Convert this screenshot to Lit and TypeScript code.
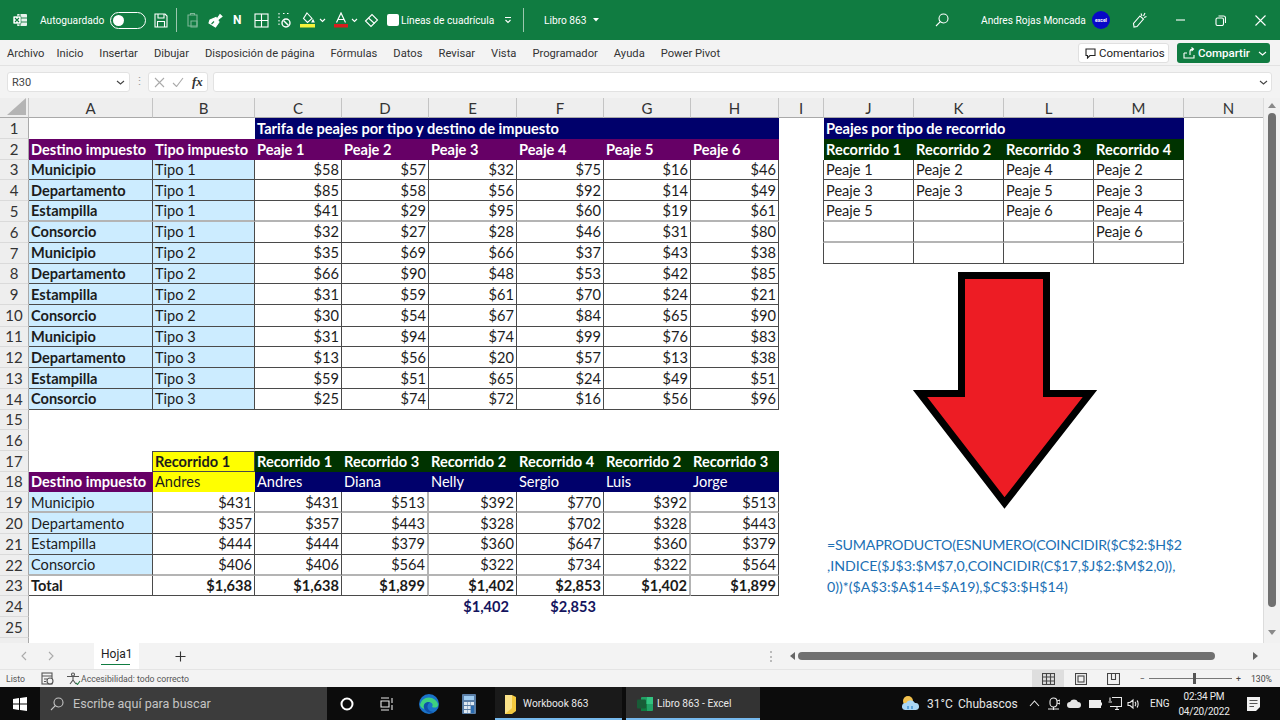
import { LitElement, html, css, svg } from "lit";
import { customElement } from "lit/decorators.js";

const COLS = ["A","B","C","D","E","F","G","H","I","J","K","L","M","N"];
const top = [
  ["Municipio","Tipo 1",58,57,32,75,16,46],["Departamento","Tipo 1",85,58,56,92,14,49],["Estampilla","Tipo 1",41,29,95,60,19,61],["Consorcio","Tipo 1",32,27,28,46,31,80],
  ["Municipio","Tipo 2",35,69,66,37,43,38],["Departamento","Tipo 2",66,90,48,53,42,85],["Estampilla","Tipo 2",31,59,61,70,24,21],["Consorcio","Tipo 2",30,54,67,84,65,90],
  ["Municipio","Tipo 3",31,94,74,99,76,83],["Departamento","Tipo 3",13,56,20,57,13,38],["Estampilla","Tipo 3",59,51,65,24,49,51],["Consorcio","Tipo 3",25,74,72,16,56,96],
];
const routes = [["Peaje 1","Peaje 2","Peaje 4","Peaje 2"],["Peaje 3","Peaje 3","Peaje 5","Peaje 3"],["Peaje 5","","Peaje 6","Peaje 4"],["","","","Peaje 6"],["","","",""]];
const bottom = [
  ["Municipio",431,431,513,392,770,392,513],["Departamento",357,357,443,328,702,328,443],["Estampilla",444,444,379,360,647,360,379],["Consorcio",406,406,564,322,734,322,564],
];
const totals = ["$1,638","$1,638","$1,899","$1,402","$2,853","$1,402","$1,899"];

const cell = (col: number, row: number, text: unknown, cls: string, span = 1) =>
  html`<div class="c ${cls}" style="grid-area:${row + 1}/${col + 1}/span 1/span ${span}">${text}</div>`;

const ic = (w: number, h: number, body: unknown, cls = "") =>
  html`<svg class=${cls} width=${w} height=${h} viewBox="0 0 ${w} ${h}" fill="none" stroke="currentColor" stroke-width="1.1">${body}</svg>`;

@customElement("x-sheet")
class XSheet extends LitElement {
  static styles = css`
    :host { display:block; position:relative; height:545px; overflow:hidden; background:#fff; }
    .grid { display:grid; grid-template-columns:29px 124px 102px 87px 87px 88px 87px 87px 88px 45px 90px 90px 90px 90px 90px; grid-template-rows:20px repeat(9,20.8px) 21.4px repeat(4,20.8px) 20.2px repeat(11,20.8px); font-family:Lato,sans-serif; font-size:14.6px; color:#1c1c1c; }
    .c { display:flex; align-items:center; padding:0 2px; white-space:nowrap; box-sizing:border-box; min-width:0; }
    .ch { background:#eeeeee; border-right:1px solid #c4c4c4; border-bottom:1px solid #a9a9a9; justify-content:center; color:#333; font-size:15px; padding:0; }
    .rh { background:#eeeeee; border-right:1px solid #a9a9a9; border-bottom:1px solid #dadada; justify-content:center; color:#333; font-size:15px; padding:0; }
    .corner { background:#eeeeee; border-right:1px solid #c4c4c4; border-bottom:1px solid #a9a9a9; position:relative; padding:0; }
    .corner svg { position:absolute; right:2px; bottom:2px; }
    .b { border-right:1px solid #4a4a4a; border-bottom:1px solid #4a4a4a; }
    .bl { border-left:1px solid #4a4a4a; margin-left:-1px; }
    .bt { border-top:1px solid #4a4a4a; }
    .gb { border-bottom:2px solid #b4b4b4; }
    .gp { padding-top:1px; }
    .gr { border-right:2px solid #b4b4b4; }
    .bold { font-weight:700; }
    .right { justify-content:flex-end; }
    .navy { background:#00006b; color:#fff; }
    .purple { background:#660066; color:#fff; }
    .green { background:#003300; color:#fff; }
    .sky { background:#ccecff; }
    .yellow { background:#ffff00; }
    .sum { color:#14145e; justify-content:flex-end; padding-right:8px; }
    .arrow { position:absolute; left:905px; top:172px; }
    .formula { position:absolute; left:827px; top:436px; color:#2070b4; font:14.2px/21px Lato,sans-serif; white-space:pre; }
    .l1 { letter-spacing:-.2px; }
    .vs { position:absolute; right:0; top:0; bottom:0; width:17px; background:#f1f1f1; border-left:1px solid #dcdcdc; box-sizing:border-box; }
    .thumb { position:absolute; left:4px; width:8px; top:15px; height:494px; border-radius:4px; background:#707070; }
    .up, .down { position:absolute; left:4px; width:0; height:0; border-left:4px solid transparent; border-right:4px solid transparent; }
    .up { top:5px; border-bottom:5px solid #8a8a8a; }
    .down { bottom:8px; border-top:5px solid #8a8a8a; }
  `;
  render() {
    const cells: unknown[] = [];
    cells.push(html`<div class="c corner" style="grid-area:1/1"><svg width="19" height="17"><path d="M19 0V17H0Z" fill="#b4b4b4"/></svg></div>`);
    COLS.forEach((l, i) => cells.push(cell(i + 1, 0, l, "ch")));
    for (let r = 1; r <= 26; r++) cells.push(cell(0, r, r === 26 ? "" : r, "rh"));

    cells.push(cell(3, 1, "Tarifa de peajes por tipo y destino de impuesto", "navy bold", 6));
    ["Destino impuesto","Tipo impuesto","Peaje 1","Peaje 2","Peaje 3","Peaje 4","Peaje 5","Peaje 6"].forEach((t, i) => cells.push(cell(i + 1, 2, t, "purple bold")));
    top.forEach((row, ri) => {
      const r = ri + 3;
      const g = r === 5 ? " gb" : "";
      cells.push(cell(1, r, row[0], "b sky bold" + g));
      cells.push(cell(2, r, row[1], "b sky" + g));
      for (let i = 2; i < 8; i++) cells.push(cell(i + 1, r, "$" + row[i], "b right" + g));
    });

    cells.push(cell(10, 1, "Peajes por tipo de recorrido", "navy bold", 4));
    ["Recorrido 1","Recorrido 2","Recorrido 3","Recorrido 4"].forEach((t, i) => cells.push(cell(10 + i, 2, t, "green bold")));
    routes.forEach((row, ri) => row.forEach((t, i) => {
      const r = ri + 3;
      cells.push(cell(10 + i, r, t, "b" + (i === 0 ? " bl" : "") + (r === 5 ? " gb" : r === 6 ? " gb gp" : "")));
    }));

    cells.push(cell(2, 17, "Recorrido 1", "b bt bl yellow bold"));
    ["Recorrido 1","Recorrido 3","Recorrido 2","Recorrido 4","Recorrido 2","Recorrido 3"].forEach((t, i) => cells.push(cell(3 + i, 17, t, "green bold")));
    cells.push(cell(1, 18, "Destino impuesto", "purple bold"));
    cells.push(cell(2, 18, "Andres", "yellow"));
    ["Andres","Diana","Nelly","Sergio","Luis","Jorge"].forEach((t, i) => cells.push(cell(3 + i, 18, t, "navy")));
    bottom.forEach((row, ri) => {
      const r = ri + 19;
      const g = r === 19 || r === 22 ? " gb gp" : "";
      cells.push(cell(1, r, row[0], "b sky" + g));
      for (let i = 1; i < 8; i++) cells.push(cell(i + 1, r, "$" + row[i], "b right" + g + (i === 3 || i === 6 ? " gr" : "")));
    });
    cells.push(cell(1, 23, "Total", "b bold"));
    totals.forEach((t, i) => cells.push(cell(2 + i, 23, t, "b bold right" + (i === 2 || i === 5 ? " gr" : ""))));
    cells.push(cell(5, 24, "$1,402", "bold sum"));
    cells.push(cell(6, 24, "$2,853", "bold sum"));

    return html`<div class="grid">${cells}</div>
      <svg class="arrow" width="200" height="250"><path d="M56.500 5.500H141.500V123.500H185L99.500 233L15 123.500H56.500Z" fill="#ed1c24" stroke="#000" stroke-width="7" stroke-miterlimit="6"/></svg>
      <div class="formula"><span class="l1">=SUMAPRODUCTO(ESNUMERO(COINCIDIR($C$2:$H$2</span>
,INDICE($J$3:$M$7,0,COINCIDIR(C$17,$J$2:$M$2,0)),
0))*($A$3:$A$14=$A19),$C$3:$H$14)</div>
      <div class="vs"><div class="up"></div><div class="thumb"></div><div class="down"></div></div>`;
  }
}

@customElement("app-root")
class AppRoot extends LitElement {
  static styles = css`
    :host { display:block; width:1280px; height:720px; overflow:hidden; font-family:Roboto,sans-serif; background:#f3f3f3; }
    .title { height:40px; background:#107c41; color:#fff; display:flex; align-items:center; font-size:10.2px; box-sizing:border-box; padding-left:12px; white-space:nowrap; }
    .title svg, .status svg, .task svg, .fx svg, .tabs svg { flex:none; display:block; }
    .m2{margin-left:2px}.m3{margin-left:3px}.m4{margin-left:4px}.m5{margin-left:5px}.m6{margin-left:6px}.m7{margin-left:7px}.m8{margin-left:8px}.m9{margin-left:9px}.m10{margin-left:10px}.m11{margin-left:11px}.m12{margin-left:12px}.m13{margin-left:13px}.m14{margin-left:14px}.m16{margin-left:16px}.m19{margin-left:19px}.m20{margin-left:20px}.m21{margin-left:21px}.m22{margin-left:22px}.m23{margin-left:23px}.m25{margin-left:25px}.m26{margin-left:26px}.m29{margin-left:29px}.m30{margin-left:30px}.m32{margin-left:32px}.m36{margin-left:36px}.m40{margin-left:40px}.m142{margin-left:142px}
    .dim { opacity:.45; }
    .sep { width:1px; height:24px; background:#9cc7ae; flex:none; }
    .N { font-weight:700; font-size:12px; width:9px; }
    .check { width:12px; height:12px; background:#fff; border-radius:2px; flex:none; }
    .auto { width:65px; } .lineas { width:89px; }
    .toggle { width:36px; height:17px; border:1px solid #fff; border-radius:9px; box-sizing:border-box; display:flex; align-items:center; padding-left:2px; flex:none; }
    .knob { width:11px; height:11px; border-radius:50%; background:#fff; }
    .grow { flex:1; }
    .who { width:102px; }
    .end { width:14px; flex:none; }
    .avatar { width:18px; height:18px; border-radius:50%; background:#0808c8; color:#fff; font-size:5px; font-weight:700; display:flex; align-items:center; justify-content:center; flex:none; }
    .ribbon { height:26px; background:#f3f3f3; display:flex; align-items:center; padding-left:7px; font-size:11.2px; color:#333; gap:16px; box-shadow:inset 0 -1px 0 #e2e2e2; white-space:nowrap; }
    .first { margin-right:-4px; }
    .btn { height:20px; box-sizing:border-box; border-radius:3px; display:flex; align-items:center; font-size:11.5px; flex:none; }
    .btn.white { width:91px; background:#fff; border:1px solid #e0e0e0; padding-left:6px; gap:3px; color:#222; margin-right:-8px; }
    .btn.share { width:93px; background:#107c41; color:#fff; padding-left:6px; gap:3px; font-weight:500; margin-right:10px; }
    .fx { height:32px; background:#f3f3f3; display:flex; align-items:center; padding:0 8px 0 7px; box-sizing:border-box; }
    .box { height:20px; background:#fff; border:1px solid #e2e2e2; border-radius:3px; box-sizing:border-box; display:flex; align-items:center; flex:none; color:#444; }
    .name { width:123px; padding:0 4px; font-size:11px; justify-content:space-between; }
    .dots { width:18px; text-align:center; color:#999; font-size:11px; flex:none; line-height:12px; }
    .fxb { width:60px; padding:0 3px 0 5px; gap:7px; color:#aaa; }
    .fxi { font:italic 700 13px "Liberation Serif",serif; color:#333; margin-left:1px; }
    .input { flex:1; margin-left:5px; justify-content:flex-end; padding-right:3px; }
    .tabs { height:26px; background:#f3f3f3; display:flex; align-items:center; position:relative; font-size:12px; color:#222; }
    .nav { color:#aaa; }
    .tab { width:45px; height:26px; background:#fff; box-sizing:border-box; padding:4px 0 0 7px; flex:none; }
    .tab span { display:block; width:29px; border-bottom:1.5px solid #107c41; padding-bottom:2px; line-height:15px; }
    .plus { color:#333; }
    .hs { position:absolute; left:770px; top:0; bottom:0; right:0; display:flex; align-items:center; }
    .split { width:1px; height:11px; border-left:2px dotted #bbb; }
    .la { width:0; height:0; border:4px solid transparent; border-right:5px solid #666; border-left:0; margin-left:17px; }
    .ra { width:0; height:0; border:4px solid transparent; border-left:5px solid #666; border-right:0; margin-left:38px; }
    .hthumb { width:417px; height:8px; background:#707070; border-radius:4px; margin-left:3px; }
    .status { height:18px; background:#f3f3f3; border-top:1px solid #e4e4e4; display:flex; align-items:center; font-size:8.7px; color:#555; padding-left:6px; position:relative; box-sizing:border-box; }
    .vw { position:absolute; left:1032px; top:0; bottom:0; width:32px; background:#dedede; }
    .views { position:absolute; left:1042px; top:0; bottom:0; right:0; display:flex; align-items:center; color:#444; }
    .slider { width:83px; height:1px; background:#777; position:relative; flex:none; }
    .slider i { position:absolute; left:44px; top:-5px; width:3px; height:11px; background:#555; }
    .task { height:33px; background:#0c0c0c; color:#eaeaea; display:flex; align-items:center; position:relative; font-size:10.2px; white-space:nowrap; }
    .start { margin-left:13px; }
    .search { width:287px; height:33px; background:#3c3c3c; display:flex; align-items:center; padding-left:10px; box-sizing:border-box; margin-left:13px; font-size:12.6px; color:#c4c4c4; gap:9px; flex:none; }
    .wb { width:127px; height:33px; display:flex; align-items:center; gap:6px; box-shadow:inset 0 -2px 0 #76b9ed; padding-left:9px; box-sizing:border-box; background:#1a1a1a; flex:none; }
    .xl { width:134px; height:33px; display:flex; align-items:center; gap:4px; box-shadow:inset 0 -2px 0 #76b9ed; padding-left:11px; box-sizing:border-box; background:#333; flex:none; margin-left:4px; }
    .time { width:64px; text-align:center; line-height:15px; font-size:10px; flex:none; letter-spacing:-.2px; }
    .t13 { font-size:12px; color:#e4e4e4; flex:none; }
    .temp { width:25px; } .chub { width:58px; } .eng { width:19px; font-size:10px; }
  `;

  render() {
    return html`
      <div class="title">
        ${ic(16,16,svg`<rect x="5" y="2" width="10" height="12" rx="1" fill="#fff" stroke="none" opacity=".9"/><path d="M8 2V14M5 6H15M5 10H15" stroke="#107c41" stroke-width=".9"/><rect x="1" y="4" width="8" height="8" rx="1" fill="#fff" stroke="#107c41" stroke-width=".6"/><path d="M3 6L7 10M7 6L3 10" stroke="#107c41" stroke-width="1.100"/>`)}
        <span class="m12 auto">Autoguardado</span>
        <span class="toggle m5"><span class="knob"></span></span>
        ${ic(14,15,svg`<path d="M1 1H11L13 3V14H1Z"/><path d="M4 1V5H10V1M3.500 14V8.500H10.500V14"/>`,"m8")}
        <span class="sep m8"></span>
        ${ic(13,16,svg`<path d="M2 3H11V14H2ZM4.500 3V1.500H8.500V3"/><path d="M5 9H11V15H5Z"/>`,"m9 dim")}
        ${ic(15,15,svg`<path d="M9 6L12 1.500L14 3.500L9.800 6.800Z" fill="currentColor"/><path d="M2 7L8 4.500L11 9L7.500 14L1 10Z" fill="currentColor"/><path d="M3.500 11L6 8.500" stroke="#107c41"/>`,"m9")}
        <span class="N m10">N</span>
        ${ic(15,15,svg`<rect x="1" y="1" width="13" height="13"/><path d="M7.500 1V14M1 7.500H14"/>`,"m12")}
        ${ic(14,17,svg`<path d="M1 1V14M5 1.500H6.500M9 1.500H10.500" stroke-dasharray="1.500 2"/><circle cx="8" cy="11" r="4" stroke-width="1.400"/><path d="M5.500 8.500L10.500 13.500" stroke-width="1.400"/>`,"m9")}
        ${ic(15,16,svg`<path d="M7 1L12 6.500L7.500 10.500L3.500 6.500Z"/><path d="M13 8L14 10H12Z" fill="currentColor"/><rect x="0" y="12" width="15" height="3.500" fill="#f5f23a" stroke="none"/>`,"m8")}
        ${ic(7,5,svg`<path d="M1 1L3.500 3.500L6 1"/>`,"m4")}
        ${ic(14,16,svg`<path d="M2.500 10.500L7 1L11.500 10.500M4 7.500H10" stroke-width="1.200"/><rect x="0" y="12" width="14" height="3.500" fill="#d81e1e" stroke="none"/>`,"m8")}
        ${ic(7,5,svg`<path d="M1 1L3.500 3.500L6 1"/>`,"m3")}
        ${ic(15,15,svg`<path d="M1.500 8L8 1.500L13.500 7L7 13.500Z"/><path d="M4.500 5L10.500 10.500"/>`,"m6")}
        <span class="check m8"></span>
        <span class="m2 lineas">Líneas de cuadrícula</span>
        ${ic(8,8,svg`<path d="M1 1.500H7M1.500 4L4 6.500L6.500 4"/>`,"m14")}
        <span class="sep m11"></span>
        <span class="m20">Libro 863</span>
        <svg class="m6" width="6" height="4"><path d="M0 0H6L3 3.500Z" fill="#fff"/></svg>
        <span class="grow"></span>
        ${ic(14,14,svg`<circle cx="8.500" cy="5.500" r="4.500"/><path d="M5.300 8.700L1 13"/>`)}
        <span class="m32 who">Andres Rojas Moncada</span>
        <span class="avatar m9">excel</span>
        ${ic(15,17,svg`<path d="M2 15L1.500 11.500L8 4L11.500 7L5 14.500Z"/><path d="M9 1.500L10 4M13 1L11.500 4M14.500 4.500L12 5.500"/>`,"m22")}
        ${ic(9,2,svg`<path d="M0 1H9"/>`,"m29")}
        ${ic(11,11,svg`<rect x="1" y="3" width="7.500" height="7.500" rx="1.500"/><path d="M3.500 1H8.500A2 2 0 0 1 10.500 3V8"/>`,"m30")}
        ${ic(11,11,svg`<path d="M.5 .5L10.500 10.500M10.500 .5L.5 10.500"/>`,"m29")}
        <span class="end"></span>
      </div>
      <div class="ribbon">
        <span class="first">Archivo</span><span>Inicio</span><span>Insertar</span><span>Dibujar</span><span>Disposición de página</span><span>Fórmulas</span><span>Datos</span><span>Revisar</span><span>Vista</span><span>Programador</span><span>Ayuda</span><span>Power Pivot</span>
        <span class="grow"></span>
        <span class="btn white">${ic(11,11,svg`<path d="M1 1H10V7.500H5L2.500 10V7.500H1Z"/>`)}Comentarios</span>
        <span class="btn share">${ic(12,12,svg`<path d="M1 6V11H11V8M7 8V4.500C7 3 8 2 10 2M8.500 .5L10.500 2L8.500 4M1 6L4 6"/>`)}Compartir ${ic(9,5,svg`<path d="M1 1L4.500 4L8 1"/>`,"m5")}</span>
      </div>
      <div class="fx">
        <div class="box name">R30 ${ic(9,5,svg`<path d="M1 1L4.500 4L8 1"/>`)}</div>
        <div class="dots">⋮</div>
        <div class="box fxb">${ic(11,11,svg`<path d="M1 1L10 10M10 1L1 10"/>`)}${ic(12,10,svg`<path d="M1 6L4.500 9.500L11 1"/>`)}<span class="fxi">fx</span></div>
        <div class="box input">${ic(9,5,svg`<path d="M1 1L4.500 4L8 1"/>`)}</div>
      </div>
      <x-sheet></x-sheet>
      <div class="tabs">
        <span class="nav m21">${ic(6,10,svg`<path d="M5 1L1 5L5 9"/>`)}</span>
        <span class="nav m21">${ic(6,10,svg`<path d="M1 1L5 5L1 9"/>`)}</span>
        <div class="tab m40"><span>Hoja1</span></div>
        <span class="plus m36">${ic(11,11,svg`<path d="M5.500 .5V10.500M.5 5.500H10.500"/>`)}</span>
        <div class="hs"><span class="split"></span><span class="la"></span><span class="hthumb"></span><span class="ra"></span></div>
      </div>
      <div class="status">
        <span>Listo</span>
        ${ic(13,13,svg`<rect x="1" y="1" width="10" height="11"/><path d="M1 4H11M3 7H6M3 9.500H5"/><circle cx="9" cy="9" r="3" fill="#f3f3f3"/>`,"m16")}
        ${ic(15,13,svg`<circle cx="7" cy="2.500" r="1.500"/><path d="M1 4.500H13M7 4.500V8L4 12M7 8L10 12"/><path d="M10 11L11.500 12.500L14 9" stroke="#2a7d4a"/>`,"m12")}
        <span>Accesibilidad: todo correcto</span>
        <span class="vw"></span>
        <div class="views">
          ${ic(13,12,svg`<rect x=".5" y=".5" width="12" height="11"/><path d="M4.500 .5V11.500M8.500 .5V11.500M.5 4H12.500M.5 8H12.500"/>`)}
          ${ic(12,12,svg`<rect x=".5" y=".5" width="11" height="11"/><rect x="3" y="3" width="6" height="6"/>`,"m20")}
          ${ic(13,12,svg`<path d="M.5 .5H12.500V11.500H.5ZM4.500 .5V6.500H8.500V.5"/>`,"m20")}
          <span class="m20">−</span>
          <span class="slider m4"><i></i></span>
          <span class="m4">+</span>
          <span class="m10">130%</span>
        </div>
      </div>
      <div class="task">
        <svg class="start" width="14" height="14"><path d="M0 2L6 1V6.500H0ZM7 1L14 0V6.500H7ZM0 7.500H6V13L0 12ZM7 7.500H14V14L7 13Z" fill="#fff"/></svg>
        <div class="search">${ic(14,14,svg`<circle cx="8.500" cy="5.500" r="4.500"/><path d="M5.300 8.700L1 13"/>`)}<span>Escribe aquí para buscar</span></div>
        <svg class="m13" width="14" height="14" fill="none"><circle cx="7" cy="7" r="5.500" stroke="#fff" stroke-width="2"/></svg>
        ${ic(14,14,svg`<path d="M1 1H9M1 13H9M1 4H9V10H1ZM12 1V6M12 8V13" stroke="#e8e8e8"/>`,"m26")}
        <svg class="m25" width="20" height="20" viewBox="0 0 20 20"><circle cx="10" cy="10" r="10" fill="#1a73c9"/><path d="M1 11C2 5 8 2 13 4C17 5.500 19 8.500 19 11C19 14 15 14 13 13C15 10 12 7.500 9 8C5 8.700 4 12 5.500 15C3 14.500 1.500 13 1 11Z" fill="#3ed17f"/><path d="M9 8C5 8.700 4 12 5.500 15C7 18 11 20 15 18C11 18 8 15 8.500 12C8.700 10 10 9 11 8.700Z" fill="#0f4fa8"/></svg>
        <svg class="m23" width="14" height="20"><rect width="14" height="20" rx="1" fill="#5a7ea6"/><rect x="2" y="2" width="10" height="4" fill="#9ecbf0"/><path d="M2 8H5V11H2ZM5.500 8H8.500V11H5.500ZM9 8H12V11H9ZM2 12H5V15H2ZM5.500 12H8.500V15H5.500ZM2 16H5V19H2ZM5.500 16H8.500V19H5.500Z" fill="#dfe9f2"/><rect x="9" y="12" width="3" height="7" fill="#2b6cb0"/></svg>
        <div class="wb m19"><svg width="13" height="20"><path d="M1 1H8L12 3V17L8 20H1Z" fill="#f3c93f"/><path d="M1 1H8V14L1 20Z" fill="#fbe38a"/></svg><span>Workbook 863</span></div>
        <div class="xl"><svg width="16" height="16"><rect x="4" y="1" width="12" height="14" rx="1" fill="#21a366"/><rect x="10" y="1" width="6" height="7" fill="#33c481"/><rect x="4" y="8" width="6" height="7" fill="#107c41"/><rect x="0" y="3.500" width="9" height="9" rx="1" fill="#185c37"/></svg><span>Libro 863 - Excel</span></div>
        <svg class="m142" width="17" height="17"><circle cx="6" cy="6" r="5" fill="#f2c14e"/><path d="M3 15A3.500 3.500 0 0 1 4 8A5 5 0 0 1 13 8A3.500 3.500 0 0 1 14 15Z" fill="#a9d6f5"/><path d="M6 11V14M10 11V14" stroke="#3d8fd1" stroke-width="1.400"/></svg>
        <span class="t13 temp m8">31°C</span><span class="t13 chub m6">Chubascos</span>
        ${ic(11,7,svg`<path d="M1 6L5.500 1L10 6"/>`,"m13")}
        ${ic(12,16,svg`<rect x="2" y="2" width="7" height="9" rx="3.500"/><path d="M0 13H11M5.500 11V14M9 5L12 4V8L9 7"/>`,"m8")}
        <svg class="m7" width="14" height="9"><path d="M3 9A3 3 0 0 1 3 3A4.500 4.500 0 0 1 11 3A3 3 0 0 1 11 9Z" fill="#e6e6e6"/></svg>
        <svg class="m8" width="13" height="8"><rect x=".5" y=".5" width="11" height="7" fill="#eee" stroke="#eee"/><rect x="12" y="2.500" width="1" height="3" fill="#eee"/></svg>
        ${ic(14,13,svg`<path d="M4 .5H13.500V9.500H2M7 12.500H11M9 9.500V12.500M2 .5V4M.5 5H4"/>`,"m6")}
        ${ic(12,12,svg`<path d="M1 4.500H3L6 2V10L3 7.500H1Z"/><path d="M8 4C9 5 9 7 8 8M10 2.500C11.500 4 11.500 8 10 9.500"/>`,"m5")}
        <span class="eng m11">ENG</span>
        <div class="time m3"><div>02:34 PM</div><div>04/20/2022</div></div>
        <svg class="m10" width="15" height="16"><path d="M1 1H14V11L10 15H1Z" fill="#f2f2f2"/><path d="M3.500 4.500H11.500M3.500 7.500H11.500M3.500 10.500H8" stroke="#555" stroke-width="1"/></svg>
      </div>
    `;
  }
}
